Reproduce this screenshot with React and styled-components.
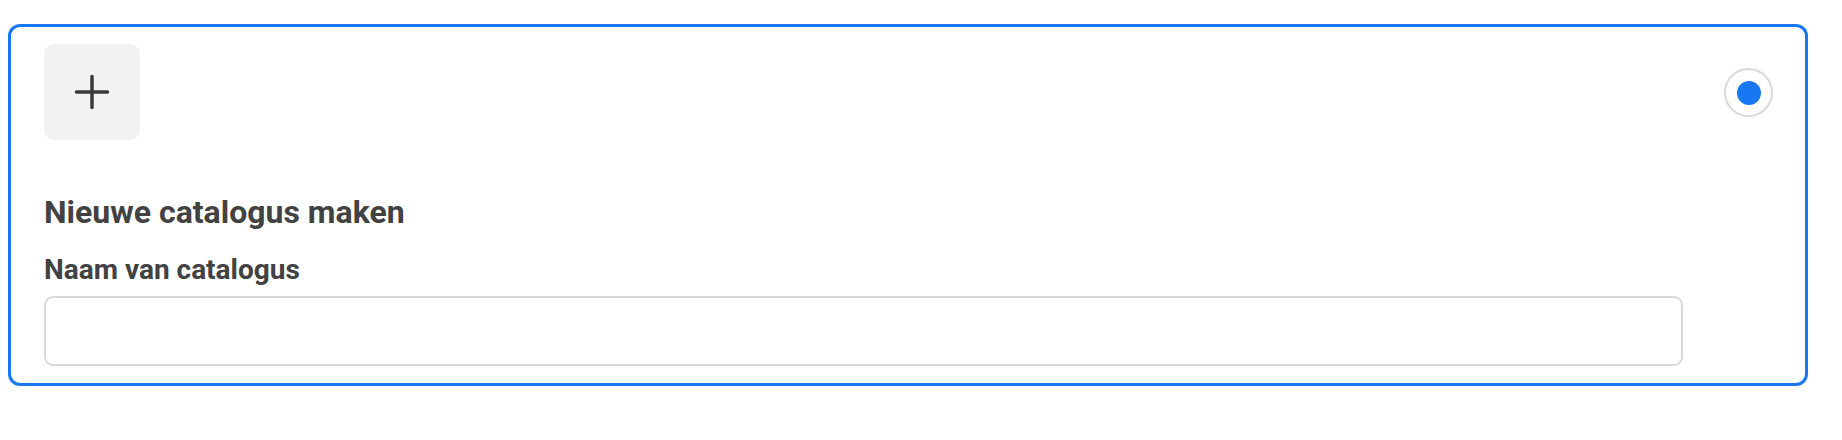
import React from "react";
import styled, { createGlobalStyle } from "styled-components";

const Global = createGlobalStyle`
  * { box-sizing: border-box; }
  body {
    margin: 8px;
    background: #ffffff;
    font-family: Roboto, "Noto Sans", "Liberation Sans", sans-serif;
  }
`;

const Card = styled.div`
  margin-top: 16px;
  width: 1800px;
  border: 3px solid #1877f2;
  border-radius: 12px;
  padding: 17px 32px 17px 33px;
  background: #fff;
  display: flex;
  flex-direction: column;
`;

const TopRow = styled.div`
  display: flex;
  align-items: center;
  justify-content: space-between;
`;

const IconTile = styled.button`
  width: 96px;
  height: 96px;
  border: none;
  border-radius: 10px;
  background: #f2f2f2;
  display: flex;
  align-items: center;
  justify-content: center;
  padding: 0;
  cursor: pointer;
`;

const Radio = styled.span`
  width: 49px;
  height: 49px;
  border-radius: 50%;
  border: 2px solid #d9d9d9;
  display: flex;
  align-items: center;
  justify-content: center;
  margin-top: 1px;
  &::after {
    content: "";
    width: 24px;
    height: 24px;
    border-radius: 50%;
    background: #1877f2;
  }
`;

const Heading = styled.h2`
  margin: 53px 0 0 0;
  font-size: 32px;
  line-height: 38px;
  font-weight: 700;
  color: #424242;
`;

const Label = styled.label`
  display: block;
  margin-top: 22px;
  font-size: 28px;
  line-height: 33px;
  font-weight: 700;
  color: #424242;
`;

const Input = styled.input`
  display: block;
  margin-top: 10px;
  margin-right: 90px;
  height: 70px;
  border: 2px solid #d9d9d9;
  border-radius: 9px;
  padding: 0 16px;
  font-size: 28px;
  font-family: inherit;
  color: #424242;
  outline: none;
  background: #fff;
`;

const PlusIcon = () => (
  <svg width="36" height="36" viewBox="0 0 36 36" fill="none">
    <path
      d="M18 2.5v31M2.5 18h31"
      stroke="#3a3a3a"
      strokeWidth="3.5"
      strokeLinecap="round"
    />
  </svg>
);

export default function App() {
  return (
    <>
      <Global />
      <Card>
        <TopRow>
          <IconTile aria-label="Nieuwe catalogus maken">
            <PlusIcon />
          </IconTile>
          <Radio role="radio" aria-checked="true" />
        </TopRow>
        <Heading>Nieuwe catalogus maken</Heading>
        <Label htmlFor="catalog-name">Naam van catalogus</Label>
        <Input id="catalog-name" type="text" />
      </Card>
    </>
  );
}
